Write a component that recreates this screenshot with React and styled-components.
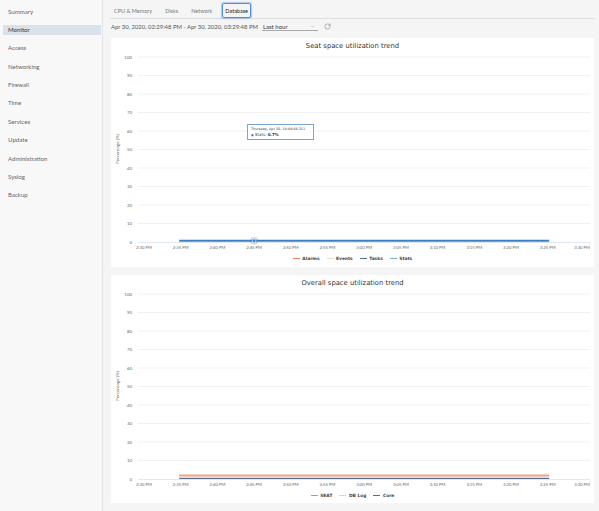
import styled, { createGlobalStyle } from 'styled-components';
import { ChevronDown, RotateCw } from 'lucide-react';

const NAV = ['Summary', 'Monitor', 'Access', 'Networking', 'Firewall', 'Time', 'Services', 'Update', 'Administration', 'Syslog', 'Backup'];
const TABS = ['CPU & Memory', 'Disks', 'Network', 'Database'];
const TIMES = ['2:30 PM', '2:35 PM', '2:40 PM', '2:45 PM', '2:50 PM', '2:55 PM', '3:00 PM', '3:05 PM', '3:10 PM', '3:15 PM', '3:20 PM', '3:25 PM', '3:30 PM'];

const X0 = 33;
const STEP = 36.7;
const Y0 = 190;
const YSTEP = 18.5;
const tx = (i) => X0 + i * STEP;
const vy = (v) => Y0 - v * 1.85;

const seatChart = {
  title: 'Seat space utilization trend',
  legend: [
    { label: 'Alarms', color: '#f4845f' },
    { label: 'Events', color: '#fcd3bd' },
    { label: 'Tasks', color: '#4e6ea6' },
    { label: 'Stats', color: '#74b4e4' },
  ],
  lines: [{ y: vy(0.7), color: '#3d7fc5', width: 2 }],
  marker: { x: tx(3), y: vy(0.7) },
  tooltip: true,
};

const overallChart = {
  title: 'Overall space utilization trend',
  legend: [
    { label: 'SEAT', color: '#f4845f' },
    { label: 'DB Log', color: '#fcc9b0' },
    { label: 'Core', color: '#4e6ea6' },
  ],
  lines: [
    { y: 185.6, color: '#fbd0bc', width: 1.2 },
    { y: 186.8, color: '#f4a080', width: 1.4 },
    { y: 189.4, color: '#5b7098', width: 1.3 },
  ],
};

export default function App() {
  return (
    <>
      <GlobalStyle />
      <Layout>
        <Sidebar>
          {NAV.map((n) => (
            <NavItem key={n} active={n === 'Monitor'}>
              {n}
            </NavItem>
          ))}
        </Sidebar>
        <Main>
          <Tabs>
            {TABS.map((t) => (
              <Tab key={t} active={t === 'Database'}>
                {t}
              </Tab>
            ))}
          </Tabs>
          <RangeRow>
            <RangeText>Apr 30, 2020, 02:29:48 PM - Apr 30, 2020, 03:29:48 PM</RangeText>
            <Select>
              <span>Last hour</span>
              <ChevronDown size={5} color="#9a9a9a" strokeWidth={2} />
            </Select>
            <RotateCw size={7} color="#8a8a8a" strokeWidth={2} />
          </RangeRow>
          <ChartCard chart={seatChart} />
          <ChartCard chart={overallChart} />
        </Main>
      </Layout>
    </>
  );
}

function ChartCard({ chart }) {
  return (
    <Card>
      <Title>{chart.title}</Title>
      <svg width="483" height="200" viewBox="0 0 483 200">
        <text
          x="8"
          y="97"
          transform="rotate(-90 8 97)"
          textAnchor="middle"
          fontSize="4.6"
          fill="#666"
          fontFamily="Lato, sans-serif"
        >
          Percentage (%)
        </text>
        {[100, 90, 80, 70, 60, 50, 40, 30, 20, 10, 0].map((v, i) => {
          const y = 5 + i * YSTEP;
          return (
            <g key={v}>
              {v !== 0 && <line x1="27" x2="479" y1={y} y2={y} stroke="#eeeeee" strokeWidth="0.8" />}
              <text x="21" y={y + 1.5} textAnchor="end" fontSize="4.4" fill="#666" fontFamily="Lato, sans-serif">
                {v}
              </text>
            </g>
          );
        })}
        <line x1="27" x2="479" y1={Y0 + 0.5} y2={Y0 + 0.5} stroke="#dbe2ee" strokeWidth="0.8" />
        <line x1="479" x2="479" y1={Y0} y2={Y0 + 3} stroke="#dbe2ee" strokeWidth="0.6" />
        {TIMES.map((t, i) => {
          const last = i === TIMES.length - 1;
          return (
            <text
              key={t}
              x={last ? 479 : tx(i)}
              y="197"
              textAnchor={last ? 'end' : 'middle'}
              fontSize="4.2"
              fill="#666"
              fontFamily="Lato, sans-serif"
            >
              {t}
            </text>
          );
        })}
        {chart.lines.map((l, i) => (
          <line key={i} x1={tx(1) - 1.5} x2={tx(11) + 1.5} y1={l.y} y2={l.y} stroke={l.color} strokeWidth={l.width} />
        ))}
        {chart.marker && (
          <g>
            <circle cx={chart.marker.x} cy={chart.marker.y} r="4" fill="rgba(61,127,197,0.25)" />
            <circle cx={chart.marker.x} cy={chart.marker.y} r="1.8" fill="#3d7fc5" stroke="#fff" strokeWidth="0.5" />
          </g>
        )}
      </svg>
      <Legend>
        {chart.legend.map((l) => (
          <LegendItem key={l.label} color={l.color}>
            {l.label}
          </LegendItem>
        ))}
      </Legend>
      {chart.tooltip && (
        <Tooltip>
          <TipHead>Thursday, Apr 30, 14:44:48.311</TipHead>
          <TipBody>
            <Dot>●</Dot> Stats: <b>0.7%</b>
          </TipBody>
        </Tooltip>
      )}
    </Card>
  );
}

const GlobalStyle = createGlobalStyle`
  body {
    margin: 0;
    font-family: Lato, "Open Sans", sans-serif;
    color: #333;
  }
`;
const Layout = styled.div`
  display: flex;
  width: 599px;
  height: 511px;
  overflow: hidden;
  background: #f5f5f5;
`;
const Sidebar = styled.nav`
  width: 103px;
  flex-shrink: 0;
  display: flex;
  flex-direction: column;
  gap: 8px;
  padding-top: 6.5px;
  box-sizing: border-box;
  background: #f8f8f8;
  border-right: 1px solid #e3e3e3;
`;
const NavItem = styled.div`
  height: 10.4px;
  line-height: 10.4px;
  margin: 0 1px 0 3px;
  padding-left: 5px;
  font-size: 6.1px;
  font-weight: 400;
  color: ${(p) => (p.active ? '#333' : '#666')};
  background: ${(p) => (p.active ? '#d9e2ea' : 'transparent')};
`;
const Main = styled.main`
  flex: 1;
  display: flex;
  flex-direction: column;
  padding: 0 4px 0 7px;
  min-width: 0;
`;
const Tabs = styled.div`
  display: flex;
  align-items: flex-end;
  height: 19px;
  padding-left: 1px;
  border-bottom: 1px solid #dddddd;
  box-sizing: border-box;
`;
const Tab = styled.div`
  height: 15px;
  line-height: 15px;
  padding: 0 2px;
  margin-right: 7px;
  font-size: 5.5px;
  color: ${(p) => (p.active ? '#222' : '#777')};
  border: 1px solid ${(p) => (p.active ? '#4a8fe0' : 'transparent')};
  border-radius: 2px;
  box-shadow: ${(p) => (p.active ? '0 0 1px 0.5px rgba(74,143,224,0.4)' : 'none')};
  box-sizing: border-box;
`;
const RangeRow = styled.div`
  display: flex;
  align-items: center;
  gap: 4px;
  height: 16px;
  padding-left: 1px;
`;
const RangeText = styled.span`
  font-size: 5.9px;
  color: #555;
  white-space: nowrap;
`;
const Select = styled.div`
  display: flex;
  align-items: center;
  justify-content: space-between;
  width: 56px;
  height: 9px;
  padding: 0 3px 0 1px;
  box-sizing: border-box;
  border-bottom: 1px solid #aaa;
  font-size: 6px;
  color: #333;
  margin-right: 2px;
`;
const Card = styled.section`
  position: relative;
  width: 483px;
  height: 231px;
  margin: 3px 0 8px 1px;
  background: #fff;
  display: flex;
  flex-direction: column;
  & + & {
    margin-top: 0;
    height: 230px;
  }
  svg {
    display: block;
  }
`;
const Title = styled.h2`
  margin: 0;
  height: 14px;
  line-height: 16px;
  text-align: center;
  font-size: 6.8px;
  font-weight: 400;
  color: #333;
  font-family: "DejaVu Sans", sans-serif;
`;
const Legend = styled.div`
  display: flex;
  justify-content: center;
  gap: 7px;
  height: 14px;
  align-items: center;
`;
const LegendItem = styled.span`
  display: flex;
  align-items: center;
  gap: 2.5px;
  font-size: 4.4px;
  font-weight: 700;
  color: #444;
  font-family: "DejaVu Sans", sans-serif;
  &::before {
    content: '';
    width: 7px;
    height: 1.2px;
    background: ${(p) => p.color};
  }
`;
const Tooltip = styled.div`
  position: absolute;
  left: 136px;
  top: 86px;
  width: 67px;
  height: 16px;
  box-sizing: border-box;
  padding: 2px 3px;
  background: rgba(255, 255, 255, 0.95);
  border: 1px solid #7aa6d4;
  font-family: "DejaVu Sans", sans-serif;
  color: #333;
  white-space: nowrap;
`;
const TipHead = styled.div`
  font-size: 3.4px;
  line-height: 5px;
`;
const TipBody = styled.div`
  font-size: 4px;
  line-height: 6px;
`;
const Dot = styled.span`
  color: #3d7fc5;
  font-size: 3px;
`;
